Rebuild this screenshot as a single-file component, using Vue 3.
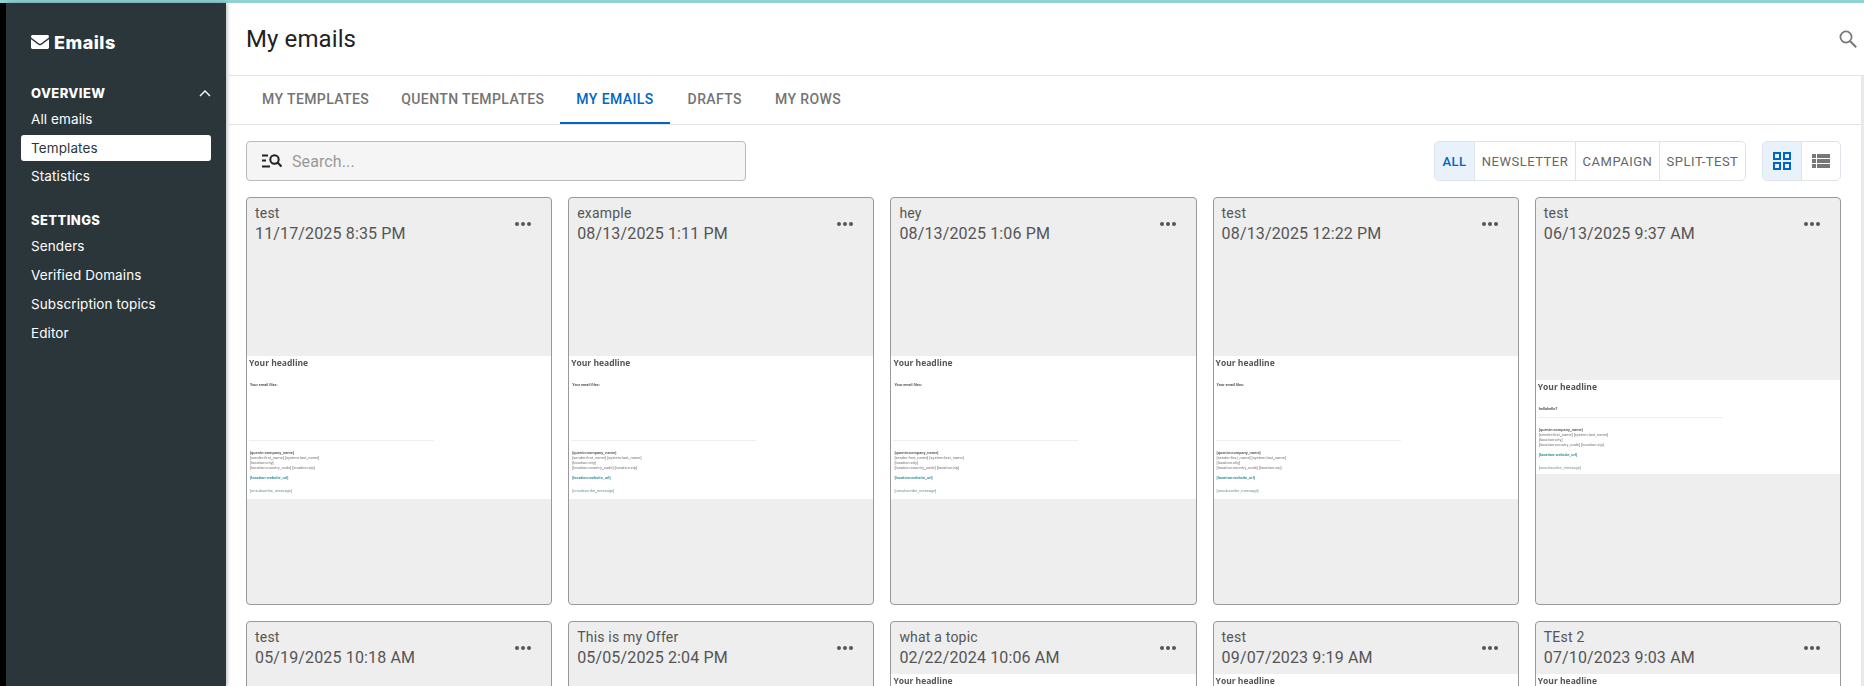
<script setup>
const tabs = ['My templates', 'Quentn templates', 'My emails', 'Drafts', 'My rows']
const filters = ['All', 'Newsletter', 'Campaign', 'Split-test']
const overview = ['All emails', 'Templates', 'Statistics']
const settings = ['Senders', 'Verified Domains', 'Subscription topics', 'Editor']
const cards = [
  { name: 'test', date: '11/17/2025 8:35 PM', kind: 'tall' },
  { name: 'example', date: '08/13/2025 1:11 PM', kind: 'tall' },
  { name: 'hey', date: '08/13/2025 1:06 PM', kind: 'tall' },
  { name: 'test', date: '08/13/2025 12:22 PM', kind: 'tall' },
  { name: 'test', date: '06/13/2025 9:37 AM', kind: 'short' },
  { name: 'test', date: '05/19/2025 10:18 AM', kind: 'none' },
  { name: 'This is my Offer', date: '05/05/2025 2:04 PM', kind: 'none' },
  { name: 'what a topic', date: '02/22/2024 10:06 AM', kind: 'top' },
  { name: 'test', date: '09/07/2023 9:19 AM', kind: 'top' },
  { name: 'TEst 2', date: '07/10/2023 9:03 AM', kind: 'top' }
]
</script>

<template>
  <div class="app">
    <div class="topline"></div>
    <div class="shell">
      <div class="strip"></div>
      <aside class="sidebar">
        <div class="brand">
          <svg class="mail" viewBox="0 0 18 14"><path d="M1.6 0h14.8C17.3 0 18 .7 18 1.6c0 .6-.3 1-.7 1.3L9.9 8.4c-.5.4-1.3.4-1.8 0L.7 2.9C.3 2.6 0 2.2 0 1.6 0 .7.7 0 1.6 0zM0 4.2l7.4 5.5c1 .7 2.2.7 3.2 0L18 4.2v8C18 13.2 17.2 14 16.2 14H1.8C.8 14 0 13.2 0 12.2z" fill="#fff"/></svg>
          <span>Emails</span>
        </div>
        <div class="section first">
          <span>OVERVIEW</span>
          <svg class="chev" viewBox="0 0 12 7"><path d="M1 6l5-5 5 5" fill="none" stroke="#fff" stroke-width="1.4"/></svg>
        </div>
        <div v-for="item in overview" :key="item" class="nav" :class="{ active: item === 'Templates' }">{{ item }}</div>
        <div class="section second"><span>SETTINGS</span></div>
        <div v-for="item in settings" :key="item" class="nav roomy">{{ item }}</div>
      </aside>
      <main class="main">
        <header class="header">
          <h1>My emails</h1>
          <svg class="hsearch" viewBox="0 0 18 18"><circle cx="7" cy="7" r="5.6" fill="none" stroke="#777" stroke-width="1.7"/><path d="M11.2 11.2l6 6" stroke="#777" stroke-width="2"/></svg>
        </header>
        <div class="below">
          <div class="scroller">
            <nav class="tabs">
              <div v-for="t in tabs" :key="t" class="tab" :class="{ on: t === 'My emails' }">{{ t }}</div>
            </nav>
            <section class="content">
              <div class="toolbar">
                <div class="search">
                  <svg class="sicon" viewBox="0 0 20 16"><path d="M0 2.5h6M0 7.5h4M0 13.5h8" stroke="#222" stroke-width="1.8"/><circle cx="12.5" cy="6.5" r="4.2" fill="none" stroke="#222" stroke-width="2"/><path d="M15.5 9.5l4 4" stroke="#222" stroke-width="2.2"/></svg>
                  <span>Search...</span>
                </div>
                <div class="filters">
                  <div v-for="f in filters" :key="f" class="seg" :class="{ on: f === 'All' }">{{ f }}</div>
                </div>
                <div class="views">
                  <div class="vbtn on">
                    <svg viewBox="0 0 18 18" width="18" height="18"><g fill="none" stroke="#0066c4" stroke-width="2"><rect x="1" y="1" width="6" height="6"/><rect x="11" y="1" width="6" height="6"/><rect x="1" y="11" width="6" height="6"/><rect x="11" y="11" width="6" height="6"/></g></svg>
                  </div>
                  <div class="vbtn">
                    <svg viewBox="0 0 18 14" width="18" height="14"><path d="M0 0h4v4H0zM5 0h13v4H5zM0 5h4v4H0zM5 5h13v4H5zM0 10h4v4H0zM5 10h13v4H5z" fill="#777"/></svg>
                  </div>
                </div>
              </div>
              <div class="grid">
                <article v-for="(c, i) in cards" :key="i" class="card">
                  <div class="chead">
                    <div class="cname">{{ c.name }}</div>
                    <div class="cdate">{{ c.date }}</div>
                    <div class="dots"><i></i><i></i><i></i></div>
                  </div>
                  <div class="cbody" :class="{ topped: c.kind === 'top' }">
                    <div v-if="c.kind !== 'none'" class="mini" :class="c.kind">
                      <div class="m-head">Your headline</div>
                      <div class="m-intro">{{ c.kind === 'short' ? 'hellohello?' : 'Your email files:' }}</div>
                      <div class="m-rule"></div>
                      <div class="m-foot">
                        <div class="m-strong">[quentn:company_name]</div>
                        <div>[sender:first_name] [system:last_name]</div>
                        <div>[location:city]</div>
                        <div>[location:country_code] [location:zip]</div>
                      </div>
                      <div class="m-link">[location:website_url]</div>
                      <div class="m-unsub">[unsubscribe_message]</div>
                    </div>
                  </div>
                </article>
              </div>
            </section>
          </div>
          <div class="track"></div>
        </div>
      </main>
    </div>
  </div>
</template>

<style>
html, body { margin: 0; background: #fff; overflow: hidden; }
</style>

<style scoped>
.app { width: 1864px; height: 686px; display: flex; flex-direction: column; overflow: hidden; font-family: Roboto, sans-serif; }
.topline { height: 3px; background: #8fd2d3; flex: none; }
.shell { flex: 1; display: flex; min-height: 0; }
.strip { width: 6px; background: #000; flex: none; }
.sidebar { width: 220px; flex: none; background: #2b363b; color: #fff; font-family: Inter, sans-serif; box-shadow: 1px 0 4px rgba(0,0,0,.3); position: relative; box-sizing: border-box; padding: 0 15px; }
.brand { height: 48px; margin-top: 15px; padding-left: 10px; display: flex; align-items: center; gap: 5px; font-size: 18px; font-weight: 800; letter-spacing: .5px; }
.mail { width: 18px; height: 14px; }
.section { height: 24px; padding-left: 10px; display: flex; align-items: center; justify-content: space-between; font-size: 13px; font-weight: 800; letter-spacing: .4px; }
.section.first { margin-top: 15px; margin-bottom: 1px; }
.section.second { margin-top: 18.6px; margin-bottom: 1.4px; }
.chev { width: 12px; height: 7px; }
.nav { height: 26px; margin-bottom: 2.4px; padding-left: 10px; display: flex; align-items: center; font-size: 13.5px; font-weight: 400; border-radius: 3px; letter-spacing: .1px; }
.section.first + .nav { margin-bottom: 3.4px; }
.nav.roomy { margin-bottom: 2.8px; }
.nav.active { background: #fff; color: #2b363b; margin-bottom: 2px; }
.main { flex: 1; min-width: 0; display: flex; flex-direction: column; position: relative; }
.header { height: 73px; flex: none; box-sizing: border-box; border-bottom: 1px solid #e2e2e2; padding: 0 7px 0 20px; display: flex; align-items: center; justify-content: space-between; }
h1 { margin: 0; font-size: 24px; font-weight: 400; color: #222; letter-spacing: .1px; }
.hsearch { width: 18px; height: 18px; }
.below { flex: 1; min-height: 0; display: flex; }
.scroller { flex: 1; min-width: 0; overflow: hidden; }
.track { width: 3px; background: #e9e9e9; flex: none; }
.tabs { height: 49px; box-sizing: border-box; border-bottom: 1px solid #e2e2e2; padding-left: 20px; display: flex; }
.tab { height: 48px; box-sizing: border-box; padding: 0 16px 2px; display: flex; align-items: center; font-size: 14px; font-weight: 500; letter-spacing: .4px; text-transform: uppercase; color: #747474; }
.tab.on { color: #0066c4; border-bottom: 2px solid #0066c4; padding-bottom: 0; margin-right: 2px; }
.tab:last-child { padding-left: 17px; }
.content { padding: 16px 20px 0; }
.toolbar { display: flex; height: 40px; }
.search { width: 500px; box-sizing: border-box; background: #f5f5f5; border: 1px solid #bbb; border-radius: 4px; display: flex; align-items: center; padding-left: 15px; gap: 10px; font-size: 16px; color: #999; letter-spacing: .1px; }
.sicon { width: 20px; height: 16px; }
.filters { margin-left: auto; display: grid; grid-template-columns: 39px 101px 84px 86px; border: 1px solid #dde3e8; border-radius: 5px; overflow: hidden; box-sizing: border-box; height: 40px; }
.seg { display: flex; align-items: center; justify-content: center; font-size: 13px; font-weight: 400; letter-spacing: .5px; text-transform: uppercase; color: #666; border-left: 1px solid #dde3e8; }
.seg:first-child { border-left: 0; }
.seg.on { background: #e9f2fb; color: #0066c4; font-weight: 500; }
.views { margin-left: 16px; width: 79px; display: flex; border: 1px solid #dde3e8; border-radius: 5px; overflow: hidden; box-sizing: border-box; }
.vbtn { flex: 1; display: flex; align-items: center; justify-content: center; }
.vbtn + .vbtn { border-left: 1px solid #dde3e8; }
.vbtn.on { background: #e9f2fb; }
.grid { margin-top: 16px; display: grid; grid-template-columns: repeat(5, 1fr); gap: 16px; }
.card { height: 408px; box-sizing: border-box; background: #eee; border: 1px solid #999; border-radius: 4px; display: flex; flex-direction: column; overflow: hidden; }
.chead { height: 52px; flex: none; position: relative; padding: 6px 0 0 8px; box-sizing: border-box; color: #555; }
.cname { font-size: 14px; line-height: 18px; letter-spacing: .2px; }
.cdate { font-size: 16px; line-height: 24px; letter-spacing: .15px; }
.dots { position: absolute; top: 24px; right: 20px; display: flex; gap: 2px; }
.dots i { width: 4px; height: 4px; border-radius: 50%; background: #555; }
.cbody { flex: 1; min-height: 0; display: flex; align-items: center; }
.cbody.topped { align-items: flex-start; }
.mini { width: 100%; background: #fff; box-sizing: border-box; padding: 2px 2px 0 2px; color: #555; height: 143px; }
.mini > * { filter: blur(.7px); }
.mini.short { height: 94px; }
.m-head { font-size: 8.5px; line-height: 10px; font-weight: 700; font-family: "Open Sans", sans-serif; color: #555; }
.m-intro { margin-top: 14px; font-size: 3.8px; line-height: 5px; font-weight: 700; color: #555; padding-left: 1px; }
.m-rule { margin-top: 53px; width: 185px; height: 1px; background: #eee; }
.short .m-rule { margin-top: 6px; }
.m-foot { margin-top: 9px; font-size: 4px; line-height: 5px; color: #777; padding-left: 1px; }
.m-strong { font-weight: 700; color: #666; font-size: 4px; }
.m-link { margin-top: 5px; font-size: 4px; line-height: 5px; color: #3a93a0; font-weight: 700; padding-left: 1px; }
.m-unsub { margin-top: 8px; font-size: 4px; line-height: 5px; color: #6f9a82; padding-left: 1px; }
</style>
